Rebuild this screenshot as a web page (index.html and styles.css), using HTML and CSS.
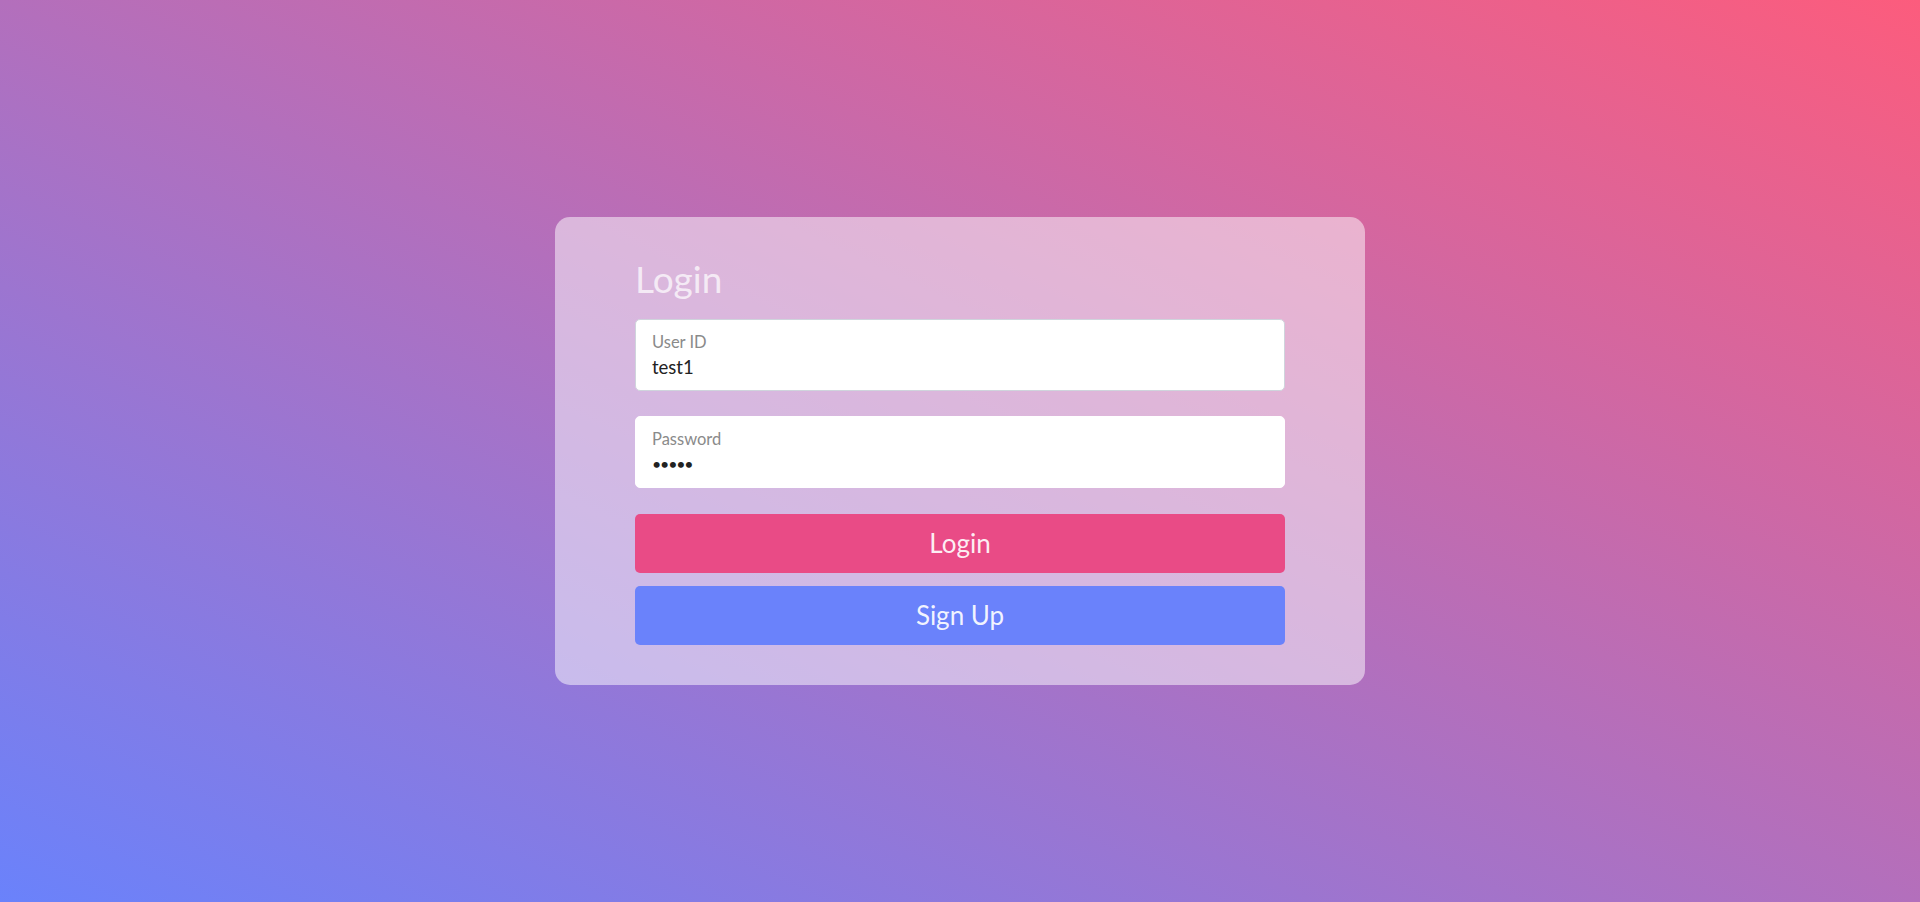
FILE: index.html
```html
<!DOCTYPE html>
<html lang="en">
<head>
<meta charset="utf-8">
<title>Login</title>
<link rel="stylesheet" href="styles.css">
</head>
<body>
<main class="page">
  <form class="card">
    <h1 class="title">Login</h1>
    <label class="field field-first">
      <span class="field-label">User ID</span>
      <input class="field-input" type="text" value="test1">
    </label>
    <label class="field">
      <span class="field-label">Password</span>
      <input class="field-input field-password" type="password" value="12345">
    </label>
    <div class="actions">
      <button type="button" class="btn btn-login">Login</button>
      <button type="button" class="btn btn-signup">Sign Up</button>
    </div>
  </form>
</main>
</body>
</html>
```
FILE: styles.css
```css
* { box-sizing: border-box; }
html, body { margin: 0; padding: 0; }
body {
  font-family: Lato, "Noto Sans", "Noto Sans CJK KR", sans-serif;
  background: linear-gradient(to top right, #6a82fb, #fc5c7d);
  min-height: 100vh;
}
.page {
  min-height: 100vh;
  display: flex;
  align-items: center;
  justify-content: center;
}
.card {
  width: 810px;
  padding: 40px 80px;
  background: rgba(255, 255, 255, 0.5);
  border-radius: 15px;
  display: flex;
  flex-direction: column;
}
.title {
  margin: 0 0 19px;
  font-size: 37px;
  line-height: 43px;
  font-weight: 400;
  color: rgba(255, 255, 255, 0.72);
}
.field {
  display: flex;
  flex-direction: column;
  height: 72px;
  padding: 13px 16px 12px;
  background: #fff;
  border: 1px solid #fff;
  border-radius: 5px;
}
.field-first { border-color: #cfd4dc; }
.field + .field { margin-top: 25px; }
.field-label {
  font-size: 16.5px;
  line-height: 18px;
  color: #8a8a8a;
}
.field-input {
  margin: 5px 0 0;
  padding: 0;
  border: none;
  outline: none;
  background: transparent;
  font-family: Lato, "Noto Sans", sans-serif;
  font-size: 18.5px;
  line-height: 22px;
  height: 22px;
  color: #222;
}
.field-password {
  font-size: 16px;
  letter-spacing: -1.2px;
}
.actions {
  margin-top: 26px;
  display: flex;
  flex-direction: column;
  gap: 13px;
}
.btn {
  height: 59px;
  border: none;
  border-radius: 5px;
  font-family: Lato, "Noto Sans", sans-serif;
  font-size: 26px;
  line-height: 59px;
  padding: 0;
  color: rgba(255, 255, 255, 0.92);
  cursor: pointer;
}
.btn-login { background: #e94b86; }
.btn-signup { background: #6a82fb; }
```
